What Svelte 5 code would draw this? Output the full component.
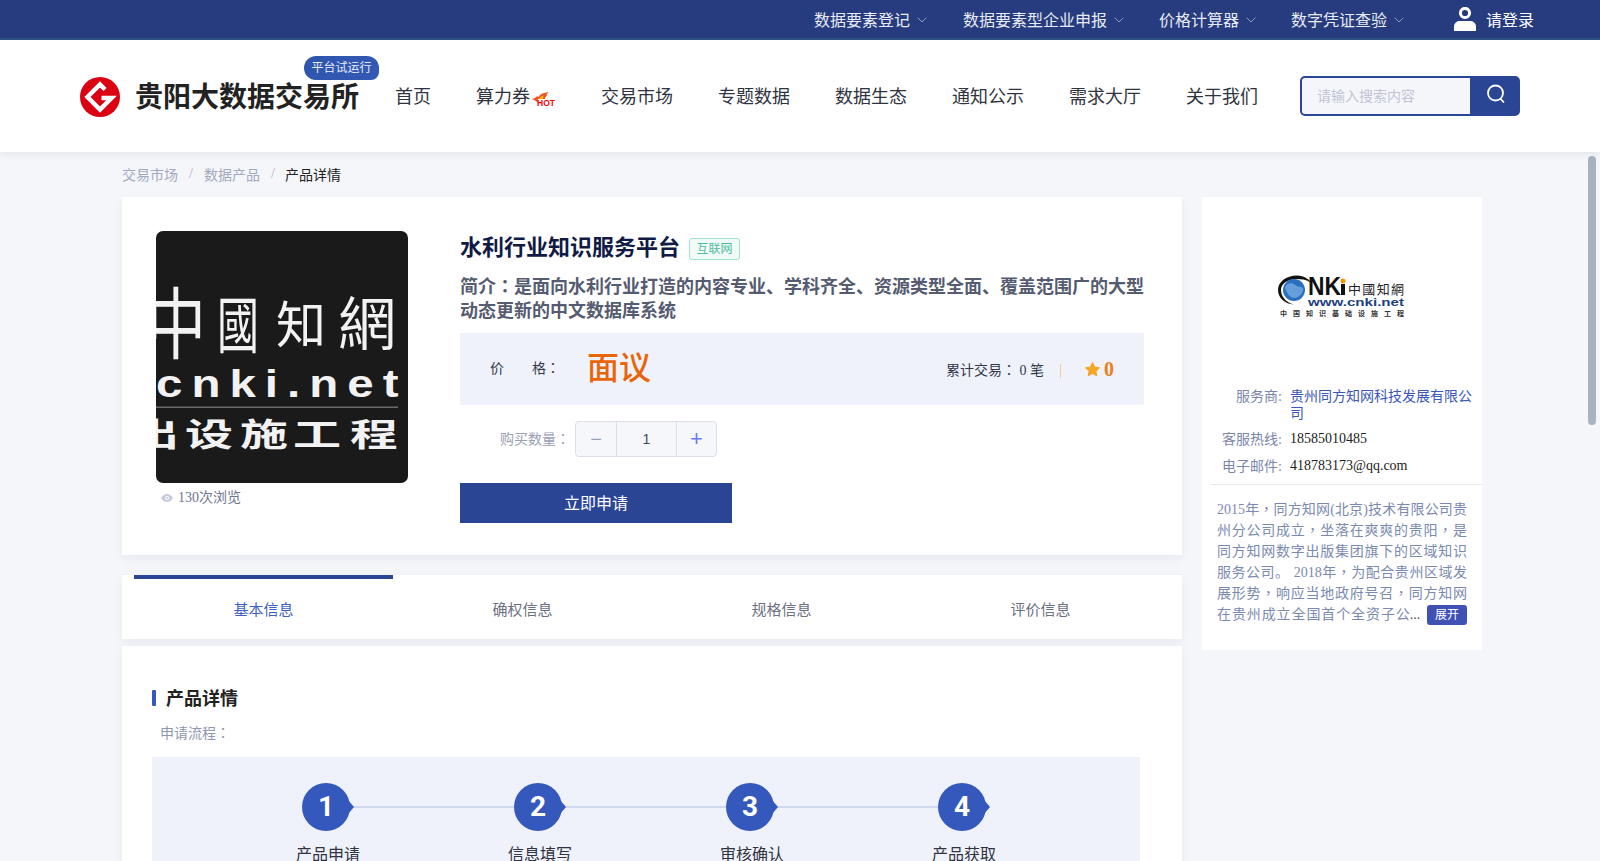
<script>
  const topLinks = ['数据要素登记', '数据要素型企业申报', '价格计算器', '数字凭证查验'];
  const navLinks = ['首页', '算力券', '交易市场', '专题数据', '数据生态', '通知公示', '需求大厅', '关于我们'];
  const tabs = ['基本信息', '确权信息', '规格信息', '评价信息'];
  const steps = ['产品申请', '信息填写', '审核确认', '产品获取'];
  const descLines = [
    '2015年，同方知网(北京)技术有限公司贵',
    '州分公司成立，坐落在爽爽的贵阳，是',
    '同方知网数字出版集团旗下的区域知识',
    '服务公司。 2018年，为配合贵州区域发',
    '展形势，响应当地政府号召，同方知网'
  ];
  const parts = (s) => s.split(/([，：])/);
</script>

{#snippet punct(text)}{#each parts(text) as p}{#if p === '，' || p === '：'}<span class="pn">{p}</span>{:else}{p}{/if}{/each}{/snippet}

<div class="app">
  <header class="topbar">
    {#each topLinks as link}
      <a class="top-link" href="#top">
        <span>{link}</span>
        <svg class="chev" viewBox="0 0 10 6" width="10" height="6"><path d="M.7.7 5 5 9.3.7" /></svg>
      </a>
    {/each}
    <a class="login" href="#top">
      <svg viewBox="0 0 22 24" width="22" height="24">
        <circle cx="11" cy="6" r="4.600" fill="none" stroke="#fff" stroke-width="3" />
        <path d="M0 24v-4.500C0 16 3 14 6 14h10c3 0 6 2 6 5.500V24z" fill="#fff" />
      </svg>
      <span>请登录</span>
    </a>
  </header>

  <nav class="nav">
    <svg class="logo" viewBox="0 0 40 40" width="40" height="40">
      <circle cx="20" cy="20" r="20" fill="#db0012" />
      <path d="M25 12.500 20 7.500 7.500 20 20 32.500 31.500 21H21.500" fill="none" stroke="#fff" stroke-width="4.500" />
    </svg>
    <div class="brand">
      贵阳大数据交易所
      <span class="trial">平台试运行</span>
    </div>
    <ul class="menu">
      {#each navLinks as item}
        <li>
          {item}
          {#if item === '算力券'}
            <svg class="hot" viewBox="0 0 24 14" width="24" height="14">
              <path d="M0 7C3 6.500 4 5 5.500 4 6 5.500 7 5 8 3 10 1 13 1 17 0 15 1.500 14 3 15 4 13 5 13 6 13 7H6V10.500C4 9 2 8 0 7Z" fill="#f4511e" />
              <path d="M7 7C8 5 10 4 12 3.500 11 5 11 6 11 7Z" fill="#ffc107" />
              <text x="5" y="13.500" class="hot-text">HOT</text>
            </svg>
          {/if}
        </li>
      {/each}
    </ul>
    <div class="search">
      <input placeholder="请输入搜索内容" />
      <button aria-label="搜索">
        <svg viewBox="0 0 20 20" width="20" height="20" fill="none" stroke="#fff" stroke-width="1.800">
          <circle cx="9.500" cy="9" r="7.500" /><path d="M14.800 15 17.500 18" stroke-linecap="round" />
        </svg>
      </button>
    </div>
  </nav>

  <main class="main">
    <div class="crumbs">
      <span>交易市场</span><i>/</i><span>数据产品</span><i>/</i><b>产品详情</b>
    </div>

    <div class="columns">
      <div class="left">
        <section class="product card">
          <div class="visual">
            <svg class="cover" viewBox="0 0 252 252" width="252" height="252">
              <rect width="252" height="252" fill="#1a1a1a" />
              <g class="cover-cjk">
                <text transform="translate(-10 122) scale(1 1.300)" font-size="60">中</text>
                <text transform="translate(61 117) scale(1 1.450)" font-size="42">國</text>
                <text transform="translate(120 112)" font-size="50">知</text>
                <text transform="translate(182 114)" font-size="58">網</text>
              </g>
              <text class="cover-latin" transform="translate(0 166) scale(1.250 1)" font-size="38" textLength="194" lengthAdjust="spacing">cnki.net</text>
              <rect y="175.500" width="242" height="1.500" fill="#6a6a6a" />
              <g class="cover-cjk heavy" transform="translate(0 215) scale(1 .660)">
                <text x="-25" font-size="48">出</text>
                <text x="29" font-size="48">设</text>
                <text x="84" font-size="48">施</text>
                <text x="137" font-size="48">工</text>
                <text x="194" font-size="48">程</text>
              </g>
            </svg>
            <div class="views">
              <svg viewBox="0 0 12 8" width="12" height="8">
                <path d="M0 4C2 1 4 0 6 0s4 1 6 4c-2 3-4 4-6 4S2 7 0 4Z" fill="#c5cbdb" />
                <circle cx="6" cy="4" r="2" fill="#fff" /><circle cx="6" cy="4" r="1" fill="#c5cbdb" />
              </svg>
              130次浏览
            </div>
          </div>
          <div class="info">
            <div class="title-row">
              <h1>水利行业知识服务平台</h1>
              <span class="tag">互联网</span>
            </div>
            <p class="intro">简介{@render punct('：')}是面向水利行业打造的内容专业、学科齐全、资源类型全面、覆盖范围广的大型动态更新的中文数据库系统</p>
            <div class="price-box">
              <span class="price-label">价　　格{@render punct('：')}</span>
              <span class="price">面议</span>
              <span class="deals">累计交易{@render punct('：')} 0 笔</span>
              <span class="sep"></span>
              <svg class="star" viewBox="0 0 24 24" width="15" height="15">
                <path d="M12 1.500 15.200 8.200 22.700 9.200 17.200 14.300 18.600 21.700 12 18.100 5.400 21.700 6.800 14.300 1.300 9.200 8.800 8.200Z" fill="#f5a623" stroke="#f5a623" stroke-width="2" stroke-linejoin="round" />
              </svg>
              <span class="score">0</span>
            </div>
            <div class="qty-row">
              <span class="qty-label">购买数量{@render punct('：')}</span>
              <div class="qty">
                <span class="minus">−</span>
                <span class="num">1</span>
                <span class="plus">+</span>
              </div>
            </div>
            <button class="apply">立即申请</button>
          </div>
        </section>

        <div class="tabs card">
          {#each tabs as tab, i}
            <div class="tab" class:active={i === 0}>{tab}</div>
          {/each}
        </div>

        <section class="detail card">
          <h2>产品详情</h2>
          <div class="flow-title">申请流程{@render punct('：')}</div>
          <div class="flow">
            {#each steps as step, i}
              <div class="step">
                <div class="step-head">
                  <span class="circle">{i + 1}</span>
                  {#if i < 3}<span class="link"></span>{/if}
                </div>
                <div class="step-label">{step}</div>
              </div>
            {/each}
          </div>
        </section>
      </div>

      <aside class="side">
        <div class="side-logo">
          <svg viewBox="0 0 126 42" width="126" height="42">
            <path d="M19 .5C8 .5 0 7 0 15s7 14 16 14.500C7 27 3 21 3 15S9 4 19 4 33 7 35 11C32 4 26 .5 19 .5Z" fill="#111" />
            <circle cx="16" cy="15" r="11" fill="#2a6fc0" />
            <path d="M7 12c3-5 8-4 10-2s5 1 8 3c1 4-3 9-8 10-5 0-9-5-10-11Z" fill="#7fb2e5" opacity=".7" />
            <text class="l-nk" x="30" y="20" textLength="33" lengthAdjust="spacingAndGlyphs">NK</text>
            <rect x="63" y="9" width="4" height="11" fill="#111" />
            <circle cx="65" cy="6" r="2.500" fill="#f39200" />
            <text class="l-cn" x="70" y="19" textLength="56">中國知網</text>
            <text class="l-www" x="30" y="30.500" textLength="96" lengthAdjust="spacingAndGlyphs">www.cnki.net</text>
            <text class="l-sub" x="2" y="40.500" textLength="124">中国知识基础设施工程</text>
          </svg>
        </div>
        <div class="row first"><span class="key">服务商:</span><span class="val link-val">贵州同方知网科技发展有限公司</span></div>
        <div class="row"><span class="key">客服热线:</span><span class="val">18585010485</span></div>
        <div class="row"><span class="key">电子邮件:</span><span class="val">418783173@qq.com</span></div>
        <hr />
        <div class="about">
          {#each descLines as line}
            <div class="about-line">{@render punct(line)}</div>
          {/each}
          <div class="about-last">
            <span class="clip">在贵州成立全国首个全资子公</span><span class="dots">...</span>
            <button class="more">展开</button>
          </div>
        </div>
      </aside>
    </div>
    <div class="thumb"></div>
  </main>
</div>

<style>
  :global(body) { margin: 0; background: #f5f6fa; }
  .app {
    height: 100vh; overflow: hidden; display: flex; flex-direction: column;
    font-family: "Liberation Serif", "Noto Sans CJK SC", serif;
    font-size: 14px; color: #222;
  }
  a { color: inherit; text-decoration: none; }
  .pn { font-family: "Noto Sans CJK TC", sans-serif; line-height: 0; }

  .topbar {
    height: 38px; flex: none; background: #273c7e; border-bottom: 2px solid #2a5580;
    display: flex; align-items: center; justify-content: flex-end; padding-right: 66px;
    color: #e8ebf5; font-size: 16px;
  }
  .top-link { display: flex; align-items: center; gap: 7px; margin-right: 35px; }
  .top-link:nth-of-type(1) { margin-right: 36px; }
  .top-link:nth-of-type(4) { margin-right: 50px; }
  .chev { fill: none; stroke: #8f9cc0; stroke-width: 1; margin-top: 2px; }
  .login { display: flex; align-items: center; gap: 10px; color: #fff; }

  .nav {
    height: 112px; flex: none; background: #fff; display: flex; align-items: center;
    padding-left: 80px; box-shadow: 0 2px 8px rgba(30, 40, 80, .08); position: relative; z-index: 2;
  }
  .logo { flex: none; margin-top: 2px; }
  .brand {
    position: relative; margin: 4px 0 0 15px; font-size: 28px; font-weight: 700; color: #222; line-height: 40px; white-space: nowrap;
  }
  .trial {
    position: absolute; left: 169px; top: -22px; width: 75px; height: 24px; box-sizing: border-box;
    border-radius: 12px 12px 8px 12px; background: linear-gradient(120deg, #2e55ad, #3459b5);
    color: #e8edf9; font-size: 12px; font-weight: 400; line-height: 24px; text-align: center;
  }
  .menu {
    list-style: none; display: flex; gap: 45px; margin: -2px 0 0 36px; padding: 0; font-size: 18px; color: #303340;
  }
  .menu li { display: flex; align-items: center; white-space: nowrap; }
  .hot { margin-left: 2px; margin-right: -26px; margin-top: 8px; overflow: visible; }
  .menu li:nth-child(2) { padding-right: 26px; }
  .hot-text { font-family: "Liberation Sans", sans-serif; font-weight: 700; font-size: 8.500px; fill: #f00; }
  .search {
    margin-left: 42px; width: 220px; height: 40px; box-sizing: border-box; display: flex;
    border: 2px solid #2b4595; border-radius: 5px; overflow: hidden; background: #2b4595;
  }
  .search input {
    width: 168px; border: 0; outline: 0; padding: 2px 0 0 15px; box-sizing: border-box; background: #f5f6fa;
    font: inherit; font-size: 14px;
  }
  .search input::placeholder { color: #c0c4d4; }
  .search button {
    flex: 1; border: 0; padding: 0 0 5px 3px; background: #2b4595; display: flex; align-items: center; justify-content: center;
  }

  .main { flex: 1; min-height: 0; overflow: hidden; padding-left: 122px; position: relative; }
  .crumbs { height: 43px; margin-bottom: 2px; display: flex; align-items: center; color: #a3a9c0; }
  .crumbs i { font-style: normal; width: 26px; text-align: center; color: #b0b5c6; }
  .crumbs b { font-weight: 400; color: #222; margin-left: -1px; }

  .columns { display: flex; gap: 20px; align-items: flex-start; }
  .left { width: 1060px; flex: none; }
  .card { background: #fff; box-shadow: 0 4px 10px rgba(30, 40, 80, .06); }

  .product { display: flex; height: 358px; box-sizing: border-box; padding: 34px 38px 0 34px; gap: 52px; }
  .visual { width: 252px; flex: none; }
  .cover { display: block; border-radius: 7px; overflow: hidden; }
  .cover-cjk text { font-family: "Noto Sans CJK TC", sans-serif; fill: #f2f2f2; font-weight: 400; }
  .cover-cjk.heavy text { font-weight: 700; }
  .cover-latin { font-family: "Liberation Sans", sans-serif; fill: #f2f2f2; font-weight: 700; }
  .views { display: flex; align-items: center; gap: 5px; margin-top: 5px; padding-left: 5px; line-height: 20px; color: #6d7591; }

  .info { flex: 1; min-width: 0; padding-top: 6px; }
  .title-row { display: flex; align-items: center; gap: 9px; height: 22px; }
  h1 { margin: 0; font-size: 22px; font-weight: 700; color: #111a44; line-height: 22px; }
  .tag {
    width: 51px; height: 22px; box-sizing: border-box; border: 1px solid #a5e0cc; border-radius: 3px; margin-top: 2px;
    background: #f0fbf7; color: #53bb9c; font-size: 12px; line-height: 20px; text-align: center;
  }
  .intro { margin: 16px 0 0; font-size: 18px; font-weight: 700; line-height: 24px; color: #555b70; }
  .price-box {
    margin-top: 10px; height: 72px; background: #eff2fb; display: flex; align-items: center;
    padding: 0 30px 0 30px;
  }
  .price-label { width: 97px; margin-bottom: 4px; color: #33384a; }
  .price { font-size: 32px; font-weight: 500; color: #e8660a; line-height: 40px; margin-bottom: 2px; }
  .deals { margin-left: auto; color: #33384a; }
  .sep { width: 1px; height: 14px; background: #f2cd9a; margin: 3px 24px 0 16px; }
  .star { margin-right: 4px; }
  .score { font-size: 20px; font-weight: 700; color: #ea801a; line-height: 20px; }

  .qty-row { margin-top: 16px; height: 36px; display: flex; align-items: center; padding-left: 40px; }
  .qty-label { width: 75px; margin-bottom: 2px; color: #9aa0b5; }
  .qty {
    width: 142px; height: 36px; box-sizing: border-box; display: flex; border: 1px solid #dcdfea; border-radius: 4px;
    background: #f6f7fb; font-family: "Liberation Sans", sans-serif;
  }
  .qty span { display: flex; align-items: center; justify-content: center; }
  .minus { width: 40px; color: #9aa0b5; font-size: 20px; }
  .num { flex: 1; border-left: 1px solid #dcdfea; border-right: 1px solid #dcdfea; color: #444a5e; }
  .plus { width: 39px; color: #6a7ce8; font-size: 22px; }
  .apply {
    display: block; margin-top: 26px; width: 272px; height: 40px; border: 0; background: #2b4595; color: #fff;
    font: inherit; font-size: 16px; padding: 0 0 3px;
  }

  .tabs { margin-top: 20px; height: 64px; padding: 0 12px; display: flex; }
  .tab {
    flex: 1; display: flex; align-items: center; justify-content: center; font-size: 15px; color: #6c7182;
    border-top: 4px solid transparent; padding: 3px 0 5px; box-sizing: border-box;
  }
  .tab.active { color: #3f5fc4; border-top-color: #2b4595; }

  .detail { margin-top: 7px; padding: 41px 42px 40px 30px; }
  h2 { margin: 0; font-size: 18px; font-weight: 700; line-height: 24px; color: #222; padding-left: 14px; position: relative; }
  h2::before { content: ""; position: absolute; left: 0; top: 3px; width: 4px; height: 16px; border-radius: 1px; background: #3558bd; }
  .flow-title { margin: 13px 0 0 8px; line-height: 20px; color: #8e96b0; }
  .flow { margin-top: 13px; height: 200px; background: #eff2fb; box-sizing: border-box; padding: 26px 0 0 150px; display: flex; }
  .step { width: 212px; flex: none; }
  .step-head { display: flex; align-items: center; }
  .circle {
    position: relative; width: 48px; height: 48px; flex: none; border-radius: 50%; background: #3558bd; color: #fff;
    font: 700 28px/48px Roboto, sans-serif; text-align: center;
  }
  .circle::after {
    content: ""; position: absolute; right: -4px; top: 17px; width: 0; height: 0;
    border-left: 6px solid #3558bd; border-top: 7px solid transparent; border-bottom: 7px solid transparent;
  }
  .link { flex: 1; height: 2px; background: #d0d8f0; }
  .step-label {
    width: 48px; margin: 12px 0 0 2px; display: flex; justify-content: center; white-space: nowrap;
    font-size: 16px; line-height: 24px; color: #303340;
  }

  .side { width: 280px; flex: none; background: #fff; height: 453px; box-sizing: border-box; }
  .side-logo { height: 191px; box-sizing: border-box; padding: 78px 0 0 76px; }
  .side-logo svg { display: block; }
  .l-nk { font: 700 25px "Liberation Sans", sans-serif; fill: #111; }
  .l-cn { font: 400 13px "Noto Sans CJK TC", sans-serif; fill: #222; }
  .l-www { font: 700 11px "Liberation Sans", sans-serif; fill: #20407e; }
  .l-sub { font: 700 7px "Noto Sans CJK SC", sans-serif; fill: #333; }
  .row { display: flex; gap: 8px; line-height: 18px; margin-bottom: 9px; }
  .row.first { margin-bottom: 8px; line-height: 17px; }
  .key { width: 80px; flex: none; text-align: right; color: #7b86ab; margin: 1px 0 -1px; }
  .row.first .key { margin: 0; }
  .val { width: 184px; color: #222; }
  .link-val { color: #3a56b8; }
  hr { border: 0; height: 1px; background: #e7e9ef; margin: 8px 0 0 9px; }
  .about { margin: 14px 0 0 15px; width: 250px; line-height: 21px; color: #7b8ab0; }
  .about-line { text-align: justify; text-align-last: justify; }
  .about-last { display: flex; align-items: center; height: 21px; }
  .clip { letter-spacing: .9px; }
  .dots { font-size: 14px; color: #555; margin-left: -1px; }
  .more {
    margin-left: auto; width: 40px; height: 20px; padding: 0; border: 0; border-radius: 3px; background: #3f51b5;
    color: #fff; font: inherit; font-size: 12px; line-height: 20px;
  }
  .thumb { position: absolute; right: 4px; top: 4px; width: 8px; height: 269px; border-radius: 4px; background: #a9b3bf; }
</style>
